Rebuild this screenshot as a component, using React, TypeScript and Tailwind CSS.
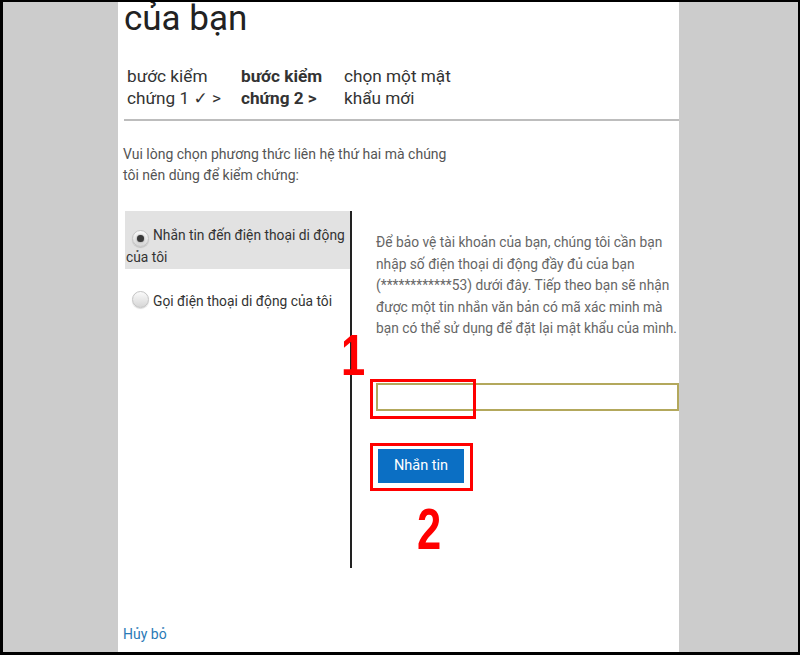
import React from "react";

const font = { fontFamily: "Roboto, 'Noto Sans', 'DejaVu Sans', sans-serif" };

function Radio({ checked }: { checked?: boolean }) {
  return (
    <span className="inline-flex h-[17px] w-[17px] items-center justify-center rounded-full border border-[#c4c4c4] bg-gradient-to-b from-[#fbfbfb] to-[#d6d6d6] align-[-2px] shadow-[0_1px_1px_rgba(0,0,0,0.15)]">
      {checked && <span className="h-[7px] w-[7px] rounded-full bg-[#3a3a3a] shadow-[0_0_2px_rgba(0,0,0,0.5)]" />}
    </span>
  );
}

function Marker({ children }: { children: React.ReactNode }) {
  return (
    <span className="block origin-left scale-x-[0.75] text-[58px] font-bold leading-none text-[#ff0000] [font-family:'Liberation_Sans',sans-serif]">
      {children}
    </span>
  );
}

export default function App() {
  return (
    <div className="flex h-[655px] w-[800px] bg-black pb-[3px] pl-[3px] pr-[2px] pt-[2px]" style={font}>
      <div className="w-[115px] bg-[#cccccc]" />
      <main className="relative flex w-[561px] flex-col overflow-hidden bg-white">
        <h1 className="pl-[6px] text-[35px] leading-[34px] text-[#222]">của bạn</h1>

        <div className="mt-[29px] flex pl-[9px] text-[17.2px] leading-[22px] text-[#333]">
          <div className="w-[114px]">
            bước kiểm
            <br />
            chứng 1 ✓ &gt;
          </div>
          <div className="w-[103px] font-bold">
            bước kiểm
            <br />
            chứng 2 &gt;
          </div>
          <div>
            chọn một mật
            <br />
            khẩu mới
          </div>
        </div>

        <div className="ml-[6px] mt-[10px] h-[2px] bg-[#bdbdbd]" />

        <p className="mt-[23px] w-[335px] pl-[5px] text-[14px] leading-[21px] text-[#555]">
          Vui lòng chọn phương thức liên hệ thứ hai mà chúng tôi nên dùng để kiểm chứng:
        </p>

        <div className="mt-[25px] flex h-[357px]">
          <div className="ml-[7px] w-[227px] border-r-2 border-[#222]">
            <div className="h-[58px] bg-[#e2e2e2] pl-[1px] pt-[14px] text-[13.8px] leading-[21px] text-[#333]">
              <span className="ml-[6px] mr-[4px]">
                <Radio checked />
              </span>
              Nhắn tin đến điện thoại di động của tôi
            </div>
            <div className="mt-[22px] pl-[1px] text-[13.8px] leading-[21px] text-[#333]">
              <span className="ml-[6px] mr-[4px]">
                <Radio />
              </span>
              Gọi điện thoại di động của tôi
            </div>
          </div>

          <div className="flex-1 pl-[24px] pt-[21px]">
            <p className="text-[13.75px] leading-[21.5px] text-[#666]">
              Để bảo vệ tài khoản của bạn, chúng tôi cần bạn nhập số điện thoại di động đầy đủ của bạn
              (************53) dưới đây. Tiếp theo bạn sẽ nhận được một tin nhắn văn bản có mã xác minh mà
              bạn có thể sử dụng để đặt lại mật khẩu của mình.
            </p>
            <input
              type="text"
              className="mt-[43px] block h-[28px] w-[303px] border-2 border-[#b3a85c] bg-white outline-none"
            />
            <button className="ml-[2px] mt-[38px] block h-[34px] w-[86px] bg-[#0b6fc4] text-[14.5px] text-white">
              Nhắn tin
            </button>
          </div>
        </div>

        <a className="mt-auto pb-[7px] pl-[5px] text-[14px] leading-[21px] text-[#2a7ab6]">Hủy bỏ</a>

        <div className="absolute left-[252px] top-[377px] h-[40px] w-[106px] border-[3px] border-[#ff0000]" />
        <div className="absolute left-[252px] top-[441px] h-[48px] w-[103px] border-[3px] border-[#ff0000]" />
        <div className="absolute left-[223px] top-[324px]">
          <Marker>1</Marker>
        </div>
        <div className="absolute left-[299px] top-[498px]">
          <Marker>2</Marker>
        </div>
      </main>
      <div className="flex-1 bg-[#cccccc]" />
    </div>
  );
}
